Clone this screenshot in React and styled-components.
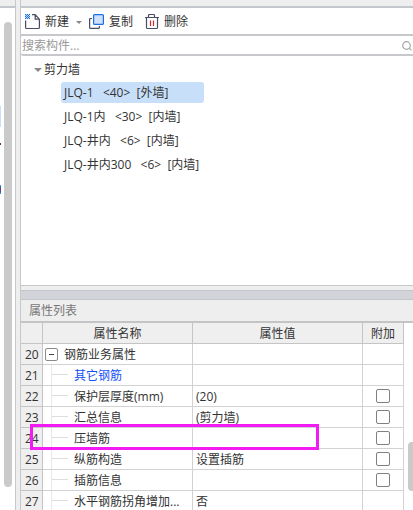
import React, { useState } from "react";
import styled, { createGlobalStyle } from "styled-components";

const GlobalStyle = createGlobalStyle`
    * {
        box-sizing: border-box;
    }
    body {
        margin: 0;
        background: #eeeeee;
        color: #333333;
        font-family: "Open Sans", "Noto Sans CJK SC", sans-serif;
        font-size: 12px;
        line-height: 20px;
    }
    button,
    input {
        font: inherit;
        color: inherit;
    }
`;

const members = [
    "JLQ-1 \u00a0\u00a0<40> \u00a0[外墙]",
    "JLQ-1内 \u00a0\u00a0<30> \u00a0[内墙]",
    "JLQ-井内 \u00a0\u00a0<6> \u00a0[内墙]",
    "JLQ-井内300 \u00a0\u00a0<6> \u00a0[内墙]",
];

const properties = [
    { id: 20, name: "钢筋业务属性", group: true },
    { id: 21, name: "其它钢筋", link: true },
    { id: 22, name: "保护层厚度(mm)", value: "(20)", check: true },
    { id: 23, name: "汇总信息", value: "(剪力墙)", check: true },
    { id: 24, name: "压墙筋", check: true, marked: true },
    { id: 25, name: "纵筋构造", value: "设置插筋", check: true },
    { id: 26, name: "插筋信息", check: true },
    { id: 27, name: "水平钢筋拐角增加...", value: "否" },
];

function NewIcon() {
    return (
        <svg width="16" height="16" viewBox="0 0 16 16" fill="none" aria-hidden="true">
            <path
                d="M.6 6.5V13.5Q.6 14.5 1.6 14.5H13.4Q14.4 14.5 14.4 13.5V5.2L10.2.6H7M10.2.6V5.2H14.4"
                stroke="#4a4d60"
                strokeWidth="1.2"
            />
            <path d="M0 0H5V5H0Z" fill="#b9d7f6" />
            <path
                d="M0 0h1v1H0zM2 0h1v1H2zM4 0h1v1H4zM1 1h1v1H1zM3 1h1v1H3zM0 2h1v1H0zM2 2h1v1H2zM4 2h1v1H4zM1 3h1v1H1zM3 3h1v1H3zM0 4h1v1H0zM2 4h1v1H2zM4 4h1v1H4z"
                fill="#1b74dc"
            />
        </svg>
    );
}

function CopyIcon() {
    return (
        <svg width="16" height="16" viewBox="0 0 16 16" fill="none" aria-hidden="true">
            <path
                d="M3 4.5H1.6Q.6 4.5 .6 5.5V13.4Q.6 14.4 1.6 14.4H9.4Q10.4 14.4 10.4 13.4V12"
                stroke="#4a4d60"
                strokeWidth="1.2"
            />
            <rect x="4.6" y=".6" width="9.8" height="9.8" rx="1" fill="#cfe0fb" stroke="#1b6fe0" strokeWidth="1.2" />
        </svg>
    );
}

function DeleteIcon() {
    return (
        <svg width="16" height="16" viewBox="0 0 16 16" fill="none" aria-hidden="true">
            <path
                d="M1 3.5H15M4.5 3.5V1.6Q4.5.5 5.6.5H9.4Q10.5.5 10.5 1.6V3.5M2.5 3.5V13.4Q2.5 14.5 3.5 14.5H12.5Q13.5 14.5 13.5 13.4V3.5"
                stroke="#4a4d60"
                strokeWidth="1.2"
            />
            <path d="M6.5 6.5V12M9.5 6.5V12" stroke="#d8232a" strokeWidth="1.2" />
        </svg>
    );
}

function SearchIcon() {
    return (
        <svg width="10" height="10" viewBox="0 0 10 10" fill="none" aria-hidden="true">
            <circle cx="4.5" cy="4.5" r="3.8" stroke="#a6a6a6" strokeWidth="1.2" />
            <path d="M7.2 7.2L9.4 9.4" stroke="#a6a6a6" strokeWidth="1.2" />
        </svg>
    );
}

function PropertyRow({ item }) {
    const labelId = `property-${item.id}`;
    return (
        <Row>
            <NumberCell>
                {item.id}
                {item.marked && <Marker />}
            </NumberCell>
            <NameCell>
                {item.group ? (
                    <GroupName>
                        <Toggle aria-label={item.name}>
                            <svg width="5" height="1" aria-hidden="true">
                                <rect width="5" height="1" fill="#444444" />
                            </svg>
                        </Toggle>
                        <Name id={labelId}>{item.name}</Name>
                    </GroupName>
                ) : (
                    <ChildName>
                        <Branch />
                        {item.link ? (
                            <NameLink as="a" href="#" id={labelId}>{item.name}</NameLink>
                        ) : (
                            <Name id={labelId}>{item.name}</Name>
                        )}
                    </ChildName>
                )}
            </NameCell>
            <ValueCell>{item.value}</ValueCell>
            <CheckCell>
                {item.check && <Checkbox type="checkbox" aria-labelledby={labelId} />}
            </CheckCell>
        </Row>
    );
}

export default function App() {
    const [selected, setSelected] = useState(0);

    return (
        <Window>
            <GlobalStyle />
            <SidePane>
                <PaneHead />
                <SideBody>
                    <SideList>
                        <SideItem $top={98} $height={21} $color="#c9e0fc" />
                        <SideItem $top={16} $height={2} $color="#7a2a34" />
                        <SideItem $top={40} $height={9} $color="linear-gradient(#4aa3ee, #2558b4 25%, #8a2c74 50%, #2558b4 75%, #4aa3ee)" />
                    </SideList>
                    <SideScroll />
                </SideBody>
            </SidePane>
            <MainPane>
                <PaneHead>
                    <PaneTitle>构件列表</PaneTitle>
                </PaneHead>
                <Toolbar>
                    <ToolButton $menu>
                        <NewIcon />
                        新建
                        <Arrow />
                    </ToolButton>
                    <ToolButton>
                        <CopyIcon />
                        复制
                    </ToolButton>
                    <ToolButton>
                        <DeleteIcon />
                        删除
                    </ToolButton>
                </Toolbar>
                <SearchBar>
                    <SearchInput type="text" placeholder="搜索构件..." aria-label="搜索构件" />
                    <SearchIcon />
                </SearchBar>
                <Tree>
                    <TreeRoot>
                        <Arrow $large />
                        剪力墙
                    </TreeRoot>
                    {members.map((member, index) => (
                        <TreeItem
                            key={member}
                            $selected={index === selected}
                            onClick={() => setSelected(index)}
                        >
                            {member}
                        </TreeItem>
                    ))}
                </Tree>
                <Splitter />
                <SectionTitle>属性列表</SectionTitle>
                <TableArea>
                    <Table>
                        <colgroup>
                            <col width="22" />
                            <col width="150" />
                            <col />
                            <col width="41" />
                        </colgroup>
                        <thead>
                            <tr>
                                <HeadCell />
                                <HeadCell>属性名称</HeadCell>
                                <HeadCell>属性值</HeadCell>
                                <HeadCell>附加</HeadCell>
                            </tr>
                        </thead>
                        <tbody>
                            {properties.map((item) => (
                                <PropertyRow key={item.id} item={item} />
                            ))}
                        </tbody>
                    </Table>
                    <TableScroll />
                </TableArea>
            </MainPane>
        </Window>
    );
}

const Window = styled.div`
    display: flex;
    gap: 4px;
    height: 100vh;
    overflow: hidden;
`;

const SidePane = styled.div`
    display: flex;
    flex-direction: column;
    flex: 0 0 16px;
    border-right: 1px solid #c6c8cc;
`;

const SideBody = styled.div`
    display: flex;
    flex: 1;
    gap: 3px;
    background: #ffffff;
`;

const SideList = styled.div`
    width: 1px;
`;

const SideItem = styled.div`
    height: ${(props) => props.$height}px;
    margin-top: ${(props) => props.$top}px;
    background: ${(props) => props.$color};
`;

const SideScroll = styled.div`
    width: 8px;
    margin: 14px 0 23px;
    border-radius: 4px;
    background: #cacaca;
`;

const MainPane = styled.div`
    display: flex;
    flex-direction: column;
    flex: 1;
    min-width: 0;
    border-left: 1px solid #c6c8cc;
`;

const PaneHead = styled.div`
    display: flex;
    align-items: flex-end;
    flex: 0 0 8px;
    overflow: hidden;
    background: #eeeeee;
    border-bottom: 2px solid #c4c8cd;
`;

const PaneTitle = styled.span`
    padding: 0 8px;
    line-height: 22px;
    color: #777777;
`;

const Toolbar = styled.div`
    display: flex;
    align-items: center;
    gap: 7px;
    flex: 0 0 28px;
    padding: 2px 4px 0;
    background: #ffffff;
    border-bottom: 2px solid #c6c8cc;
`;

const ToolButton = styled.button`
    display: flex;
    align-items: center;
    gap: 4px;
    padding: 0 ${(props) => (props.$menu ? 0 : 4)}px 0 0;
    border: 0;
    background: none;
`;

const Arrow = styled.span`
    margin-left: ${(props) => (props.$large ? 0 : 3)}px;
    border: solid transparent;
    border-width: ${(props) => (props.$large ? "4px 4px 0" : "3px 3px 0")};
    border-top-color: #888888;
`;

const SearchBar = styled.div`
    display: flex;
    align-items: center;
    flex: 0 0 20px;
    padding: 2px 1px 0;
    background: #ffffff;
    border-bottom: 2px solid #c6c8cc;
    border-radius: 3px 0 0 3px;
`;

const SearchInput = styled.input`
    flex: 1;
    min-width: 0;
    height: 16px;
    padding: 0;
    border: 0;
    outline: 0;
    background: none;
    &::placeholder {
        color: #999999;
        opacity: 1;
    }
`;

const Tree = styled.div`
    flex: 0 0 230px;
    padding: 2px 0 0 13px;
    background: #ffffff;
    border-bottom: 1px solid #c6c8cc;
`;

const TreeRoot = styled.div`
    display: flex;
    align-items: center;
    gap: 2px;
    height: 24px;
`;

const TreeItem = styled.button`
    display: block;
    width: 143px;
    height: 21px;
    margin: 0 0 3px 27px;
    padding: 0 3px;
    border: 0;
    border-radius: 3px;
    background: ${(props) => (props.$selected ? "#c8dffa" : "none")};
    line-height: 21px;
    text-align: left;
    white-space: nowrap;
`;

const Splitter = styled.div`
    flex: 0 0 10px;
    margin-top: 4px;
    background: #d2d4da;
    border: solid #c2c5c9;
    border-width: 1px 0;
`;

const SectionTitle = styled.div`
    flex: 0 0 23px;
    padding: 1px 8px 0;
    color: #777777;
    border-bottom: 2px solid #c4c4c6;
`;

const TableArea = styled.div`
    display: flex;
    justify-content: space-between;
    flex: 1;
    min-height: 0;
    background: #ffffff;
`;

const Table = styled.table`
    flex: 1;
    height: 0;
    table-layout: fixed;
    border-collapse: separate;
    border-spacing: 0;
    line-height: 18px;
`;

const HeadCell = styled.th`
    height: 21px;
    padding: 2px 0 0;
    background: #efefef;
    border: solid #c4c4c4;
    border-width: 0 1px 1px 0;
    font-weight: 400;
`;

const Row = styled.tr`
    position: relative;
`;

const Cell = styled.td`
    height: 21px;
    padding: 0;
    border: solid #d2d2d2;
    border-width: 0 1px 1px 0;
    white-space: nowrap;
`;

const NumberCell = styled(Cell)`
    padding: 2px 0 0 4px;
    background: #efefef;
    border-color: #c4c4c4;
`;

const NameCell = styled(Cell)`
    overflow: hidden;
`;

const ValueCell = styled(Cell)`
    padding: 2px 0 0 3px;
`;

const CheckCell = styled(Cell)`
    text-align: center;
`;

/* highlight frame drawn over a row */
const Marker = styled.div`
    position: absolute;
    z-index: 1;
    top: -4px;
    bottom: -1px;
    left: 9px;
    right: 85px;
    border: 3px solid #f31bf3;
    pointer-events: none;
`;

const GroupName = styled.div`
    display: flex;
    align-items: center;
    gap: 6px;
    height: 20px;
    padding-left: 2px;
`;

const Toggle = styled.button`
    display: flex;
    align-items: center;
    justify-content: center;
    width: 13px;
    height: 13px;
    padding: 0;
    border: 1px solid #8a8a8a;
    border-radius: 2px;
    background: #ffffff;
`;

const ChildName = styled.div`
    display: flex;
    align-items: center;
    gap: 6px;
    height: 20px;
    padding-left: 8px;
`;

const Branch = styled.span`
    align-self: stretch;
    width: 17px;
    background: linear-gradient(#dddddd, #dddddd) 0 9px / 17px 1px no-repeat;
    border-left: 1px solid #e8e8e8;
`;

const Name = styled.span`
    padding-top: 2px;
`;

const NameLink = styled(Name)`
    color: #1450f5;
    text-decoration: none;
`;

const Checkbox = styled.input`
    appearance: none;
    display: block;
    width: 14px;
    height: 14px;
    margin: 0 auto;
    border: 1px solid #808080;
    border-radius: 2px;
    background: #ffffff;
    &:checked {
        background: #1b74dc;
    }
`;

const TableScroll = styled.div`
    flex: 0 0 5px;
    height: 49px;
    margin: 119px 0 0 4px;
    border-radius: 4px 0 0 4px;
    background: #cacaca;
`;
